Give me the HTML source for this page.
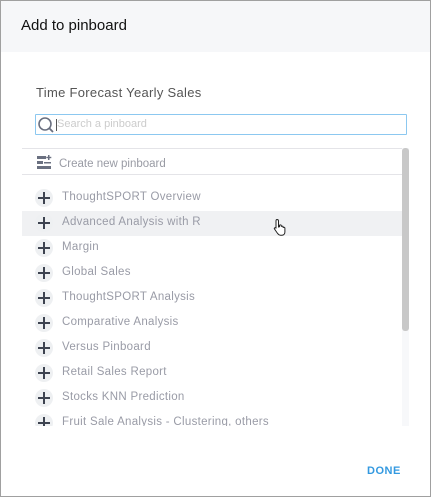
<!DOCTYPE html>
<html><head><style>
body{margin:0;width:431px;height:497px;overflow:hidden;font-family:"Liberation Sans",sans-serif;background:#fff}
.frame{position:absolute;left:0;top:0;width:429px;height:495px;border:1px solid #a0a0a0;background:#fff}
.hdr{position:absolute;left:0;top:0;width:429px;height:51px;background:#f6f7f9}
.hdr span{position:absolute;left:20px;top:16px;font-size:15px;color:#111}
.sub{position:absolute;left:35px;top:84px;font-size:13px;color:#555;letter-spacing:0.3px}
.search{position:absolute;left:34px;top:113px;width:370px;height:19px;border:1px solid #8cc8f0;border-radius:1px}
.search .ph{position:absolute;left:21px;top:3px;font-size:11px;color:#ccc}
.cur{position:absolute;left:20px;top:4px;width:1px;height:12px;background:#555}
.line{position:absolute;left:21px;width:381px;height:1px;background:#e4e4e8}
.create{position:absolute;left:58px;top:157px;font-size:11.5px;color:#999ba4}
.list{position:absolute;left:21px;top:185px;width:381px;height:240px;overflow:hidden}
.row{height:25px;position:relative}
.row.hl{background:#f0f1f3}
.row i{position:absolute;left:13px;top:3px;width:18px;height:18px;border-radius:50%;background:#eef0f2}
.row i:before{content:"";position:absolute;left:3px;top:8px;width:12px;height:2px;background:#3d4350}
.row i:after{content:"";position:absolute;left:8px;top:3px;width:2px;height:12px;background:#3d4350}
.row span{position:absolute;left:40px;top:5px;font-size:11.5px;color:#999ba6;letter-spacing:0.3px}
.track{position:absolute;left:401px;top:147px;width:7px;height:278px;background:#f7f8fa}
.thumb{position:absolute;left:401px;top:147px;width:7px;height:183px;background:#c8c8c8;border-radius:3px}
.done{position:absolute;left:366px;top:464px;font-size:11px;font-weight:bold;color:#3399e0;letter-spacing:0.5px}
</style></head><body>
<div class="frame">
<div class="hdr"><span>Add to pinboard</span></div>
<div class="sub">Time Forecast Yearly Sales</div>
<div class="search">
<svg style="position:absolute;left:1px;top:1px" width="18" height="18" viewBox="0 0 18 18"><circle cx="8" cy="8" r="6" fill="none" stroke="#6a7080" stroke-width="1.6"/><line x1="12.3" y1="12.3" x2="16" y2="16" stroke="#6a7080" stroke-width="1.8"/></svg>
<div class="cur"></div><span class="ph">Search a pinboard</span></div>
<div class="line" style="top:147px"></div>
<svg style="position:absolute;left:35px;top:154px" width="16" height="16" viewBox="0 0 16 16"><rect x="1" y="1" width="9" height="3" fill="#6a7080"/><rect x="1" y="6" width="6" height="3" fill="#6a7080"/><rect x="8" y="7" width="7" height="1.5" fill="#6a7080"/><rect x="1" y="11" width="14" height="3" fill="#6a7080"/><rect x="12" y="0" width="1.5" height="5" fill="#6a7080"/><rect x="10.3" y="1.8" width="5" height="1.4" fill="#6a7080"/></svg>
<div class="create">Create new pinboard</div>
<div class="line" style="top:173px"></div>
<div class="list">
<div class="row"><i></i><span>ThoughtSPORT Overview</span></div>
<div class="row hl"><i></i><span>Advanced Analysis with R</span></div>
<div class="row"><i></i><span>Margin</span></div>
<div class="row"><i></i><span>Global Sales</span></div>
<div class="row"><i></i><span>ThoughtSPORT Analysis</span></div>
<div class="row"><i></i><span>Comparative Analysis</span></div>
<div class="row"><i></i><span>Versus Pinboard</span></div>
<div class="row"><i></i><span>Retail Sales Report</span></div>
<div class="row"><i></i><span>Stocks KNN Prediction</span></div>
<div class="row"><i></i><span>Fruit Sale Analysis - Clustering, others</span></div>
</div>
<div class="track"></div><div class="thumb"></div>
<svg style="position:absolute;left:272px;top:217px" width="16" height="18" viewBox="0 0 16 18"><path d="M4 1.5c1 0 1.5.6 1.5 1.5v6l1-.3V7.5c0-.8 1.6-.9 1.8 0v1.3c.2-.9 1.7-.9 1.8 0v1c.3-.8 1.7-.7 1.8.2v4c0 1.8-1.2 3.2-3 3.2H7.5c-1.2 0-2-.6-2.8-1.6L1.5 11c-.6-.9.6-1.8 1.4-1L3 10.5V3c0-.9.4-1.5 1-1.5z" fill="#fff" stroke="#222" stroke-width="1"/></svg>
<div class="done">DONE</div>
</div>
</body></html>
